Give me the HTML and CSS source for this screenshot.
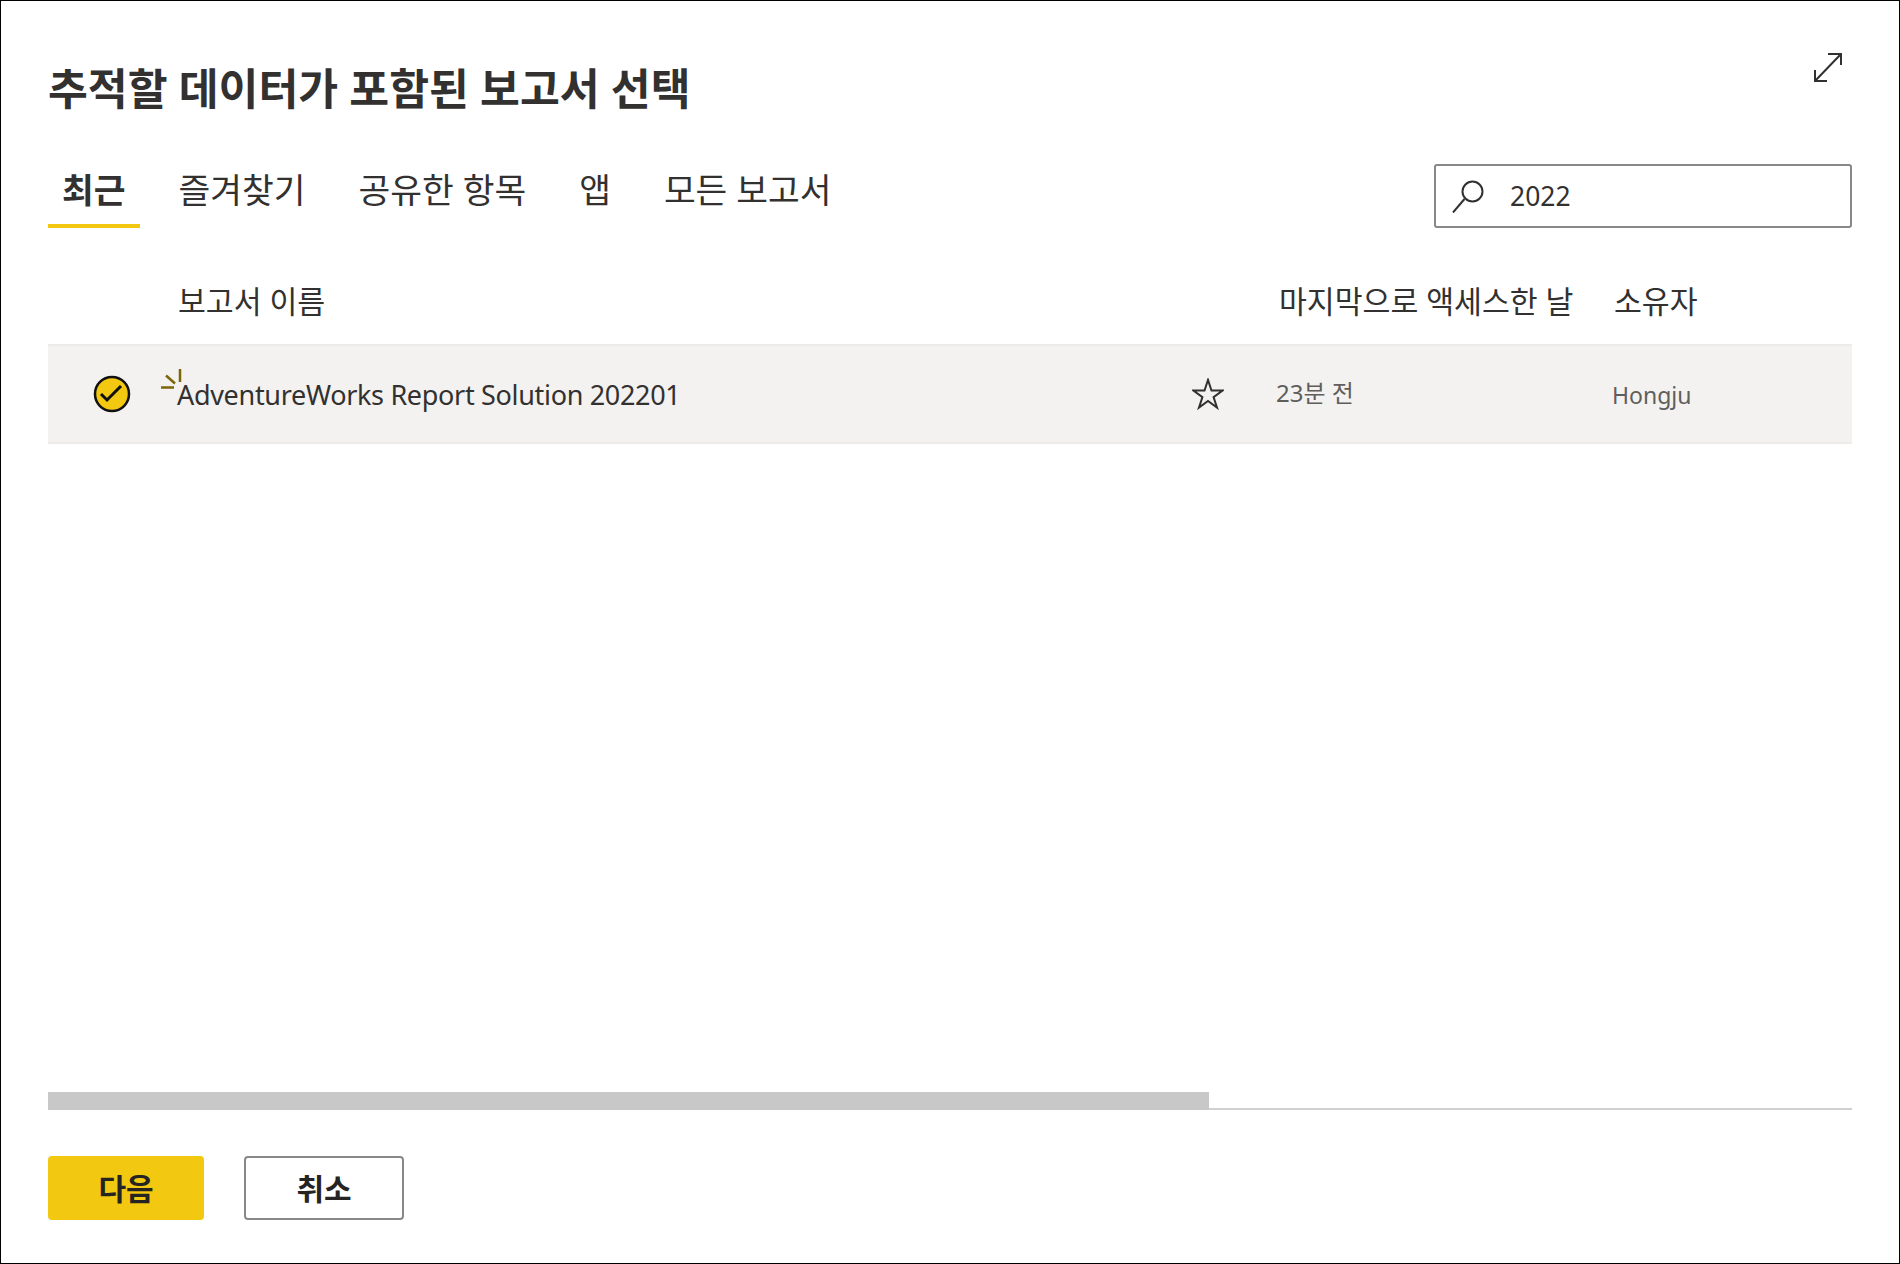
FILE: index.html
```html
<!DOCTYPE html>
<html lang="ko">
<head>
<meta charset="utf-8">
<title>보고서 선택</title>
<link rel="stylesheet" href="styles.css">
</head>
<body>
<main class="dialog">
  <header class="head">
    <h1 class="title">추적할 데이터가 포함된 보고서 선택</h1>
    <svg class="expand" width="28" height="29" viewBox="0 0 28 29" fill="none" stroke="#323130" stroke-width="2"><path d="M1 28 27 1M14 1h13v11M1 17v11h12"/></svg>
  </header>
  <div class="toolbar">
    <nav class="tabs">
      <span class="tab active">최근</span>
      <span class="tab">즐겨찾기</span>
      <span class="tab">공유한 항목</span>
      <span class="tab">앱</span>
      <span class="tab">모든 보고서</span>
    </nav>
    <div class="search">
      <svg class="search-icon" width="32" height="33" viewBox="0 0 32 33" fill="none" stroke="#323130" stroke-width="2"><circle cx="20.5" cy="11.5" r="10"/><path d="M12.500 19 1 32.500"/></svg>
      <span class="search-value">2022</span>
    </div>
  </div>
  <div class="cols">
    <span class="col-name">보고서 이름</span>
    <span class="col-date">마지막으로 액세스한 날짜</span>
    <span class="col-owner">소유자</span>
  </div>
  <div class="row">
    <svg class="check" width="38" height="38" viewBox="0 0 38 38"><circle cx="19" cy="19" r="17" fill="#f2c811" stroke="#111" stroke-width="2.500"/><path d="M8 19l6 6 14-14" fill="none" stroke="#111" stroke-width="3"/></svg>
    <div class="name">
      <svg class="spark" width="22" height="24" viewBox="0 0 22 24" fill="none" stroke="#7d6608" stroke-width="2.500"><path d="M0 18.500h13M5 6.500l9 8M19 0v13"/></svg>
      AdventureWorks Report Solution 202201
    </div>
    <svg class="star" width="32" height="32" viewBox="0 0 34 34" fill="none" stroke="#323130" stroke-width="2.100"><path d="M17 2l3.700 11.300H32.500l-9.600 7 3.700 11.200L17 24.500l-9.600 7 3.700-11.200-9.600-7h11.800z"/></svg>
    <span class="date">23분 전</span>
    <span class="owner">Hongju</span>
  </div>
  <div class="spacer"></div>
  <div class="scroll"><div class="thumb"></div></div>
  <footer class="foot">
    <button class="btn primary"><span class="btn-label">다음</span></button>
    <button class="btn"><span class="btn-label">취소</span></button>
  </footer>
</main>
</body>
</html>
```
FILE: styles.css
```css
* { box-sizing: border-box; }
html, body { margin: 0; padding: 0; background: #fff; }
body { font-family: "Noto Sans", "Noto Sans CJK KR", sans-serif; color: #323130; }
.dialog { width: 1900px; height: 1264px; border: 1px solid #000; padding: 52px 47px 43px; display: flex; flex-direction: column; }
.head { display: flex; justify-content: space-between; align-items: flex-start; height: 67px; }
.title { margin: 6px 0 0; font-size: 43.300px; line-height: 60px; font-weight: 700; }
.expand { margin-right: 10px; }
.toolbar { margin-top: 44px; display: flex; justify-content: space-between; height: 64px; }
.tabs { display: flex; gap: 24px; }
.tab { padding: 0 14px 8px; font-size: 34.500px; line-height: 52px; height: 64px; white-space: nowrap; margin-right: 1px; }
.tab.active { font-weight: 700; border-bottom: 4px solid #f2c811; padding-right: 15px; margin-right: 0; }
.search { width: 418px; height: 64px; border: 2px solid #8a8886; border-radius: 3px; display: flex; align-items: center; padding-left: 16px; }
.search-icon { flex: none; }
.search-value { margin-left: 26px; font-size: 26.500px; }
.cols { height: 116px; display: flex; align-items: center; font-size: 30.300px; padding: 27px 0 0 130px; }
.col-name { width: 1101px; }
.col-date { width: 295px; white-space: nowrap; overflow: hidden; }
.col-owner { margin-left: 40px; }
.row { height: 100px; background: #f3f2f1; border-top: 2px solid #edebe9; border-bottom: 2px solid #edebe9; display: flex; align-items: center; padding-left: 45px; }
.check { flex: none; }
.name { position: relative; margin-left: 46px; width: 1015px; font-size: 27px; letter-spacing: -0.32px; }
.spark { position: absolute; left: -16px; top: -7px; }
.star { flex: none; }
.date { margin-left: 52px; width: 336px; font-size: 24px; line-height: 30px; padding-bottom: 2px; color: #605e5c; }
.owner { font-size: 23px; color: #605e5c; padding-top: 2px; }
.spacer { flex: 1; }
.scroll { height: 18px; border-bottom: 2px solid #d0d0d0; }
.thumb { width: 1161px; height: 18px; background: #c8c8c8; }
.foot { margin-top: 46px; display: flex; gap: 40px; }
.btn { height: 64px; width: 160px; border: 2px solid #8a8886; border-radius: 4px; background: #fff; color: #252423; font-family: inherit; font-size: 30px; font-weight: 700; padding: 0 0 2px; }
.btn.primary { width: 156px; background: #f2c811; border-color: #f2c811; }
```
